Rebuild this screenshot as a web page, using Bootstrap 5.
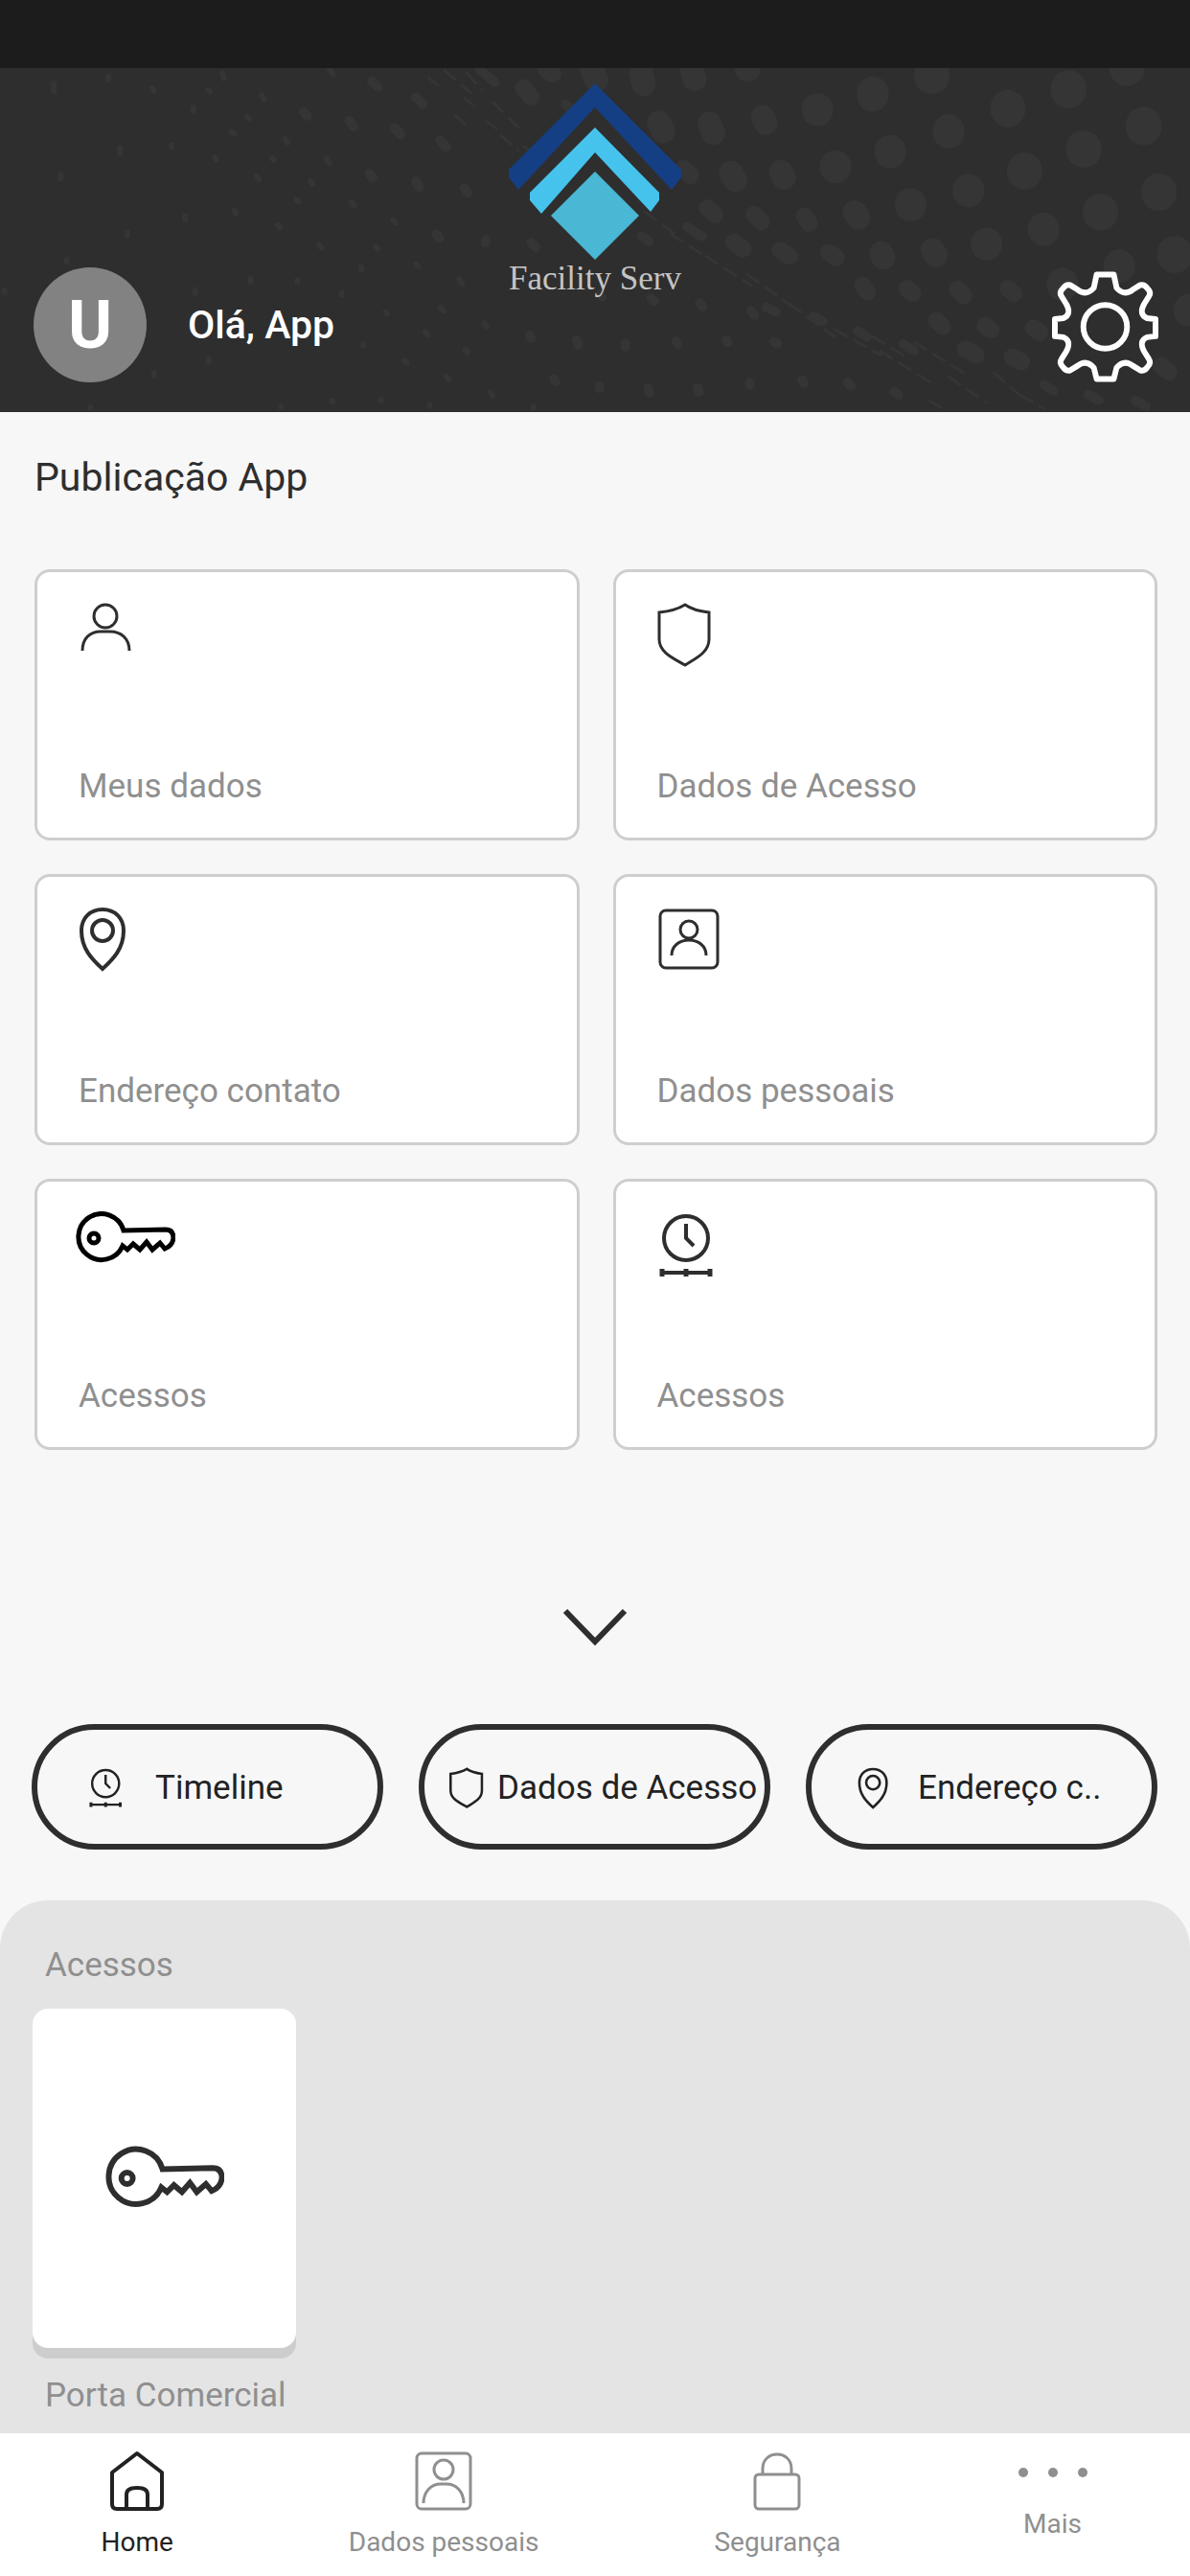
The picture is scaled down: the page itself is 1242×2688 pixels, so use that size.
<!DOCTYPE html>
<html lang="pt-BR">
<head>
<meta charset="utf-8">
<meta name="viewport" content="width=device-width, initial-scale=1">
<title>Facility Serv</title>
<link href="https://cdn.jsdelivr.net/npm/bootstrap@5.3.0/dist/css/bootstrap.min.css" rel="stylesheet">
<style>
  :root { --ink: #2e2e2e; --soft: #8f8f8f; --line: #cecece; }
  body { background: #f7f7f7; color: var(--ink); font-family: Roboto, "Liberation Sans", sans-serif; font-size: 35px; line-height: 40px; }
  a { color: inherit; text-decoration: none; }
  svg { display: block; flex: none; fill: none; stroke: currentColor; }
  .status-strip { height: 71px; background: #1c1c1c; }
  .hero { height: 359px; background: var(--ink); padding: 0 33px 31px 35px; overflow: hidden; }
  .hero-dots { position: absolute; inset: 0; width: 100%; height: 100%; stroke: #353535; stroke-linecap: round; }
  .hero-dots path { vector-effect: non-scaling-stroke; }
  .brand { position: absolute; top: 14px; left: 0; right: 0; }
  .brand-name { font-family: "Liberation Serif", serif; font-size: 35px; line-height: 35px; color: #c4c4c4; }
  .avatar { width: 118px; height: 120px; background: #828282; font-size: 70px; }
  .hello { font-size: 41px; line-height: 50px; margin-left: 43px; }
  .gear { color: #fff; }
  .home-main { padding: 43px 34px 53px 36px; }
  .page-title { font-size: 41px; line-height: 50px; margin: 0 0 71px; }
  .tiles { display: grid; grid-template-columns: 1fr 1fr; gap: 35px; }
  .tile { height: 283px; background: #fff; border: 3px solid var(--line); border-radius: 16px; padding: 31px 43px 33px; }
  .tile svg { margin-left: -3px; }
  .tile span, .panel-text { color: var(--soft); }
  .more { margin: 162px auto 78px; color: var(--ink); }
  .pills { display: grid; grid-template-columns: repeat(3, 1fr); gap: 37px; margin: 0 0 0 -3px; }
  .pill { height: 131px; border: 6px solid var(--ink); border-radius: 66px; color: #222; padding: 2px 0 0 51px; gap: 34px; }
  .pill-tight { padding-left: 24px; gap: 14px; }
  .pill-cut { padding-left: 46px; gap: 30px; }
  .panel { background: #e4e4e4; border-radius: 50px 50px 0 0; padding: 48px 34px 18px; }
  .panel-text { padding-left: 13px; margin: 0; font-size: 35px; line-height: 40px; }
  .door { width: 275px; height: 354px; background: #fff; border-radius: 16px; box-shadow: 0 11px 0 #cdcdcd; margin: 25px 0 30px; }
  .tabs { min-height: 149px; background: #fff; padding: 17px 14px; color: var(--soft); font-size: 28px; line-height: 36px; }
  .tabs a { gap: 13px; }
  .tabs a.active { color: #222; }
  .tabs .tab-more { gap: 26px; padding-top: 14px; }
  .tab-more svg { fill: currentColor; stroke: none; }
</style>
</head>
<body class="d-flex flex-column min-vh-100">
<svg class="d-none" aria-hidden="true">
  <symbol id="i-shield" viewBox="0 0 60 70"><path d="M32 3C24 8 15 10 5 11v28c0 14 15 20 27 27 11-7 25-13 25-27V11C48 10 39 8 32 3z"/></symbol>
  <symbol id="i-pin" viewBox="0 0 54 68"><path d="M28 65C17 55 6 44 6 25 6 12 15 3 28 3s22 9 22 22c0 19-11 30-22 40z"/><circle cx="28" cy="25" r="11"/></symbol>
  <symbol id="i-clock" viewBox="0 0 62 72"><circle cx="33" cy="28" r="23"/><path d="M33 13v15l8 8M8 64h50"/><path stroke-width="5" d="M8 60v8M33 60v8M58 60v8"/></symbol>
  <symbol id="i-key" viewBox="0 0 104 56"><path d="M50 20A24 24 0 1 0 49 36L54 40 60 34 67 40 74 32 80 40 88 33 93 39Q101 36 102 28 102 19 94 19z"/><circle cx="19" cy="28" r="5"/></symbol>
  <symbol id="i-badge" viewBox="0 0 68 68"><rect x="6" y="4" width="60" height="60" rx="6"/><circle cx="36" cy="24" r="9"/><path d="M18 51c0-10 8-16 18-16s18 6 18 16"/></symbol>
</svg>

<div class="status-strip"></div>
<header class="hero position-relative d-flex align-items-end justify-content-between">
  <svg class="hero-dots" viewBox="0 186 1568 940" preserveAspectRatio="none" aria-hidden="true">
    <path stroke-width="37" d="M1408 240v8M1507 340v8M1328 294v5M1228 205v3M1428 405v5M1350 466v4M1450 578v4M1527 522v6M1548 693v5M1485 182v5"/>
    <path stroke-width="33" d="M1150 252v10M1250 355v8M1173 412v5M1276 518v5M1375 624v5M1200 557v5M1300 665v4M1475 725v5M1101 454v4M1077 297v5M1400 775v5M1567 846v3"/>
    <path stroke-width="25" d="M1005 320l4 16M935 338l5 25M868 335l6 24M845 200l3 30M912 192l3 25M780 190l6 28M984 190h2M1029 470l4 16M963 472l6 20M1126 580l5 15M1229 683l4 14M1161 692l3 12"/>
    <path stroke-width="18" d="M1060 590l6 20M994 586l9 20M932 568l10 18M1092 690l10 14M1028 684l12 16M967 662l12 18M900 460l10 20M1137 780l6 18M1195 788l8 14M1262 790l8 18M1328 788l8 14M1234 876l8 16M1298 890l8 12M1362 896l8 12M1530 1000l10 16M1272 954l14 16M1334 976l12 12M720 190l8 12M690 240l10 26"/>
    <path stroke-width="10" d="M1376 1052l12 16M1434 1078l14 16M1496 1094l14 16M632 190l20 35M490 222l8 16M548 266l9 18M520 350l8 18M580 384l8 18M460 330l6 16M400 305l5 12M640 655v8M700 662l6 14M575 640l4 10M612 515l4 12M548 495l4 16M487 475l4 10M905 620l20 26M845 645l10 14M1072 864l12 14M1010 840l12 12M1130 905l12 15M1190 940l14 18M790 1055v6M854 1060l2 14M919 1060l2 12M988 1045v7M1057 1038l2 8M1117 1045l4 9M1178 1070l6 10M760 930l2 12M824 938v10M891 932l2 8M957 930l2 6M1020 934l4 5M858 815l4 8M922 828l4 10M990 850l4 12M730 1035l2 8M698 916l2 8M745 285l9 15M790 805l3 6"/>
    <path stroke-width="6" d="M71 228v20M143 208v10M158 405v14M80 478v10M226 396v6M168 636v8M244 590v10M255 294v10M345 260l3 12M293 200l2 14M434 188l5 15M430 434l4 12M338 480l3 10M409 495l3 8M463 552l4 10M518 602l3 8M309 574l2 10M366 615l3 7M421 670l3 8M495 674l3 6M548 722l3 6M605 762l4 14M580 840l5 10M508 852l2 6M560 905l3 10M613 955l3 8M533 986l3 6M588 1028l3 8M646 1072l3 10M476 730v8M392 765v6M330 762v9M257 792v10M450 800v6M638 884l3 8M479 940v4M275 980v10M203 1020v6M119 1112v3M370 1110v3M438 1094v5M502 1092v4M566 1106v4M703 1112v4M6 793v6M88 710v4M200 240l3 8M274 246l3 6M325 318l3 6M376 380l3 10M305 360l3 5M283 430l2 6M358 432l3 6M390 545l3 6"/>
    <path stroke-width="3" stroke-dasharray="14 9" d="M586 192l34 62M615 200l20 45M565 212l12 22M612 268l18 30M650 280l34 70M600 315l12 24M640 330l20 30M660 370l22 40M690 400l20 30M850 580l40 60M884 640l60 80M930 700l60 80M985 750l60 90M1040 830l60 90M1100 900l60 70M1160 960l70 90M1205 935l70 90M1250 1030l50 70M1310 1020l40 70M1225 1095l20 25M1345 1080l30 36M1150 920l40 50"/>
  </svg>
  <div class="brand d-flex flex-column align-items-center">
    <svg width="182" height="188" viewBox="0 0 182 188" stroke="none" aria-hidden="true">
      <g stroke="none">
        <path fill="#153f84" d="M91 2 181 92v8l-10 13L91 27 11 113 1 100v-8z"/>
        <path fill="#45c3ec" d="M91 48l67 68v8l-9 12L91 74l-56 64-12-14v-8z"/>
        <path fill="#4ab7d4" d="M91 94l46 46-46 46-46-46z"/>
      </g>
    </svg>
    <div class="brand-name">Facility Serv</div>
  </div>
  <div class="d-flex align-items-center position-relative text-white fw-medium">
    <div class="avatar rounded-circle d-flex align-items-center justify-content-center fw-bold">U</div>
    <div class="hello">Olá, App</div>
  </div>
  <a href="#" class="gear position-relative" aria-label="Configurações">
    <svg width="111" height="118" viewBox="0 0 112 118" stroke-width="6" stroke-linejoin="round">
      <path d="M47 5h18l3 14q8 9 17 2l8-5q4-1 7 3 5 5 2 9l-5 8q-6 11 3 15l9 1v18l-9 1q-9 4-3 15l5 8q3 4-2 9-3 4-7 3l-8-5q-9-7-17 2l-3 12H47l-3-12q-8-9-17-2l-8 5q-4 1-7-3-5-5-2-9l5-8q6-11-3-15l-9-1V52l9-1q9-4 3-15l-5-8q-3-4 2-9 3-4 7-3l8 5q9 7 17-2z"/>
      <circle cx="56" cy="60" r="23"/>
    </svg>
  </a>
</header>

<main class="home-main">
  <h1 class="page-title fw-normal">Publicação App</h1>
  <div class="tiles">
    <a href="#" class="tile d-flex flex-column justify-content-between">
      <svg width="58" height="56" viewBox="0 0 58 56" stroke-width="3"><circle cx="31" cy="15" r="12"/><path d="M7 51c0-13 8-20 19-20h10c11 0 20 7 20 20"/></svg>
      <span>Meus dados</span>
    </a>
    <a href="#" class="tile d-flex flex-column justify-content-between">
      <svg width="60" height="70" stroke-width="3"><use href="#i-shield"/></svg>
      <span>Dados de Acesso</span>
    </a>
    <a href="#" class="tile d-flex flex-column justify-content-between">
      <svg width="54" height="68" stroke-width="4"><use href="#i-pin"/></svg>
      <span>Endereço contato</span>
    </a>
    <a href="#" class="tile d-flex flex-column justify-content-between">
      <svg width="68" height="68" stroke-width="3"><use href="#i-badge"/></svg>
      <span>Dados pessoais</span>
    </a>
    <a href="#" class="tile d-flex flex-column justify-content-between">
      <svg width="104" height="56" stroke-width="5" color="#000"><use href="#i-key"/></svg>
      <span>Acessos</span>
    </a>
    <a href="#" class="tile d-flex flex-column justify-content-between">
      <svg width="62" height="72" stroke-width="4"><use href="#i-clock"/></svg>
      <span>Acessos</span>
    </a>
  </div>
  <button type="button" class="more btn p-0 border-0 d-block" aria-label="Ver mais">
    <svg width="70" height="46" viewBox="0 0 70 46" stroke-width="6"><path d="M3 6l31 32L65 6"/></svg>
  </button>
  <div class="pills">
    <a href="#" class="pill d-flex align-items-center text-nowrap overflow-hidden"><svg width="38" height="44" stroke-width="4"><use href="#i-clock"/></svg>Timeline</a>
    <a href="#" class="pill pill-tight d-flex align-items-center text-nowrap overflow-hidden"><svg width="38" height="44" stroke-width="4"><use href="#i-shield"/></svg>Dados de Acesso</a>
    <a href="#" class="pill pill-cut d-flex align-items-center text-nowrap overflow-hidden"><svg width="35" height="44" stroke-width="4"><use href="#i-pin"/></svg>Endereço c..</a>
  </div>
</main>

<section class="panel flex-grow-1">
  <h2 class="panel-text fw-normal">Acessos</h2>
  <a href="#" class="door d-flex align-items-center justify-content-center" aria-label="Porta Comercial">
    <svg width="124" height="68" stroke-width="5"><use href="#i-key"/></svg>
  </a>
  <div class="panel-text">Porta Comercial</div>
</section>

<nav class="tabs d-flex justify-content-around align-items-start">
  <a href="#" class="active d-flex flex-column align-items-center" aria-current="page">
    <svg width="64" height="66" viewBox="0 0 64 66" stroke-width="4" stroke-linejoin="round"><path d="M32 4L6 24v33q0 5 5 5h42q5 0 5-5V24z"/><path d="M21 62V47q0-7 11-7t11 7v15"/></svg>
    Home
  </a>
  <a href="#" class="d-flex flex-column align-items-center">
    <svg width="62" height="66" viewBox="0 0 62 66" stroke-width="3"><rect x="3" y="4" width="56" height="58" rx="5"/><circle cx="31" cy="21" r="10"/><path d="M10 56c0-12 8-20 18-20h6c10 0 18 8 18 20"/></svg>
    Dados pessoais
  </a>
  <a href="#" class="d-flex flex-column align-items-center">
    <svg width="52" height="66" viewBox="0 0 52 66" stroke-width="3"><rect x="3" y="26" width="46" height="36" rx="4"/><path d="M11 26v-6c0-20 30-20 30 0v6"/></svg>
    Segurança
  </a>
  <a href="#" class="tab-more d-flex flex-column align-items-center">
    <svg width="76" height="20" viewBox="0 0 76 20"><circle cx="7" cy="10" r="5"/><circle cx="38" cy="10" r="5"/><circle cx="69" cy="10" r="5"/></svg>
    Mais
  </a>
</nav>
<script src="https://cdn.jsdelivr.net/npm/bootstrap@5.3.0/dist/js/bootstrap.bundle.min.js"></script>
</body>
</html>
